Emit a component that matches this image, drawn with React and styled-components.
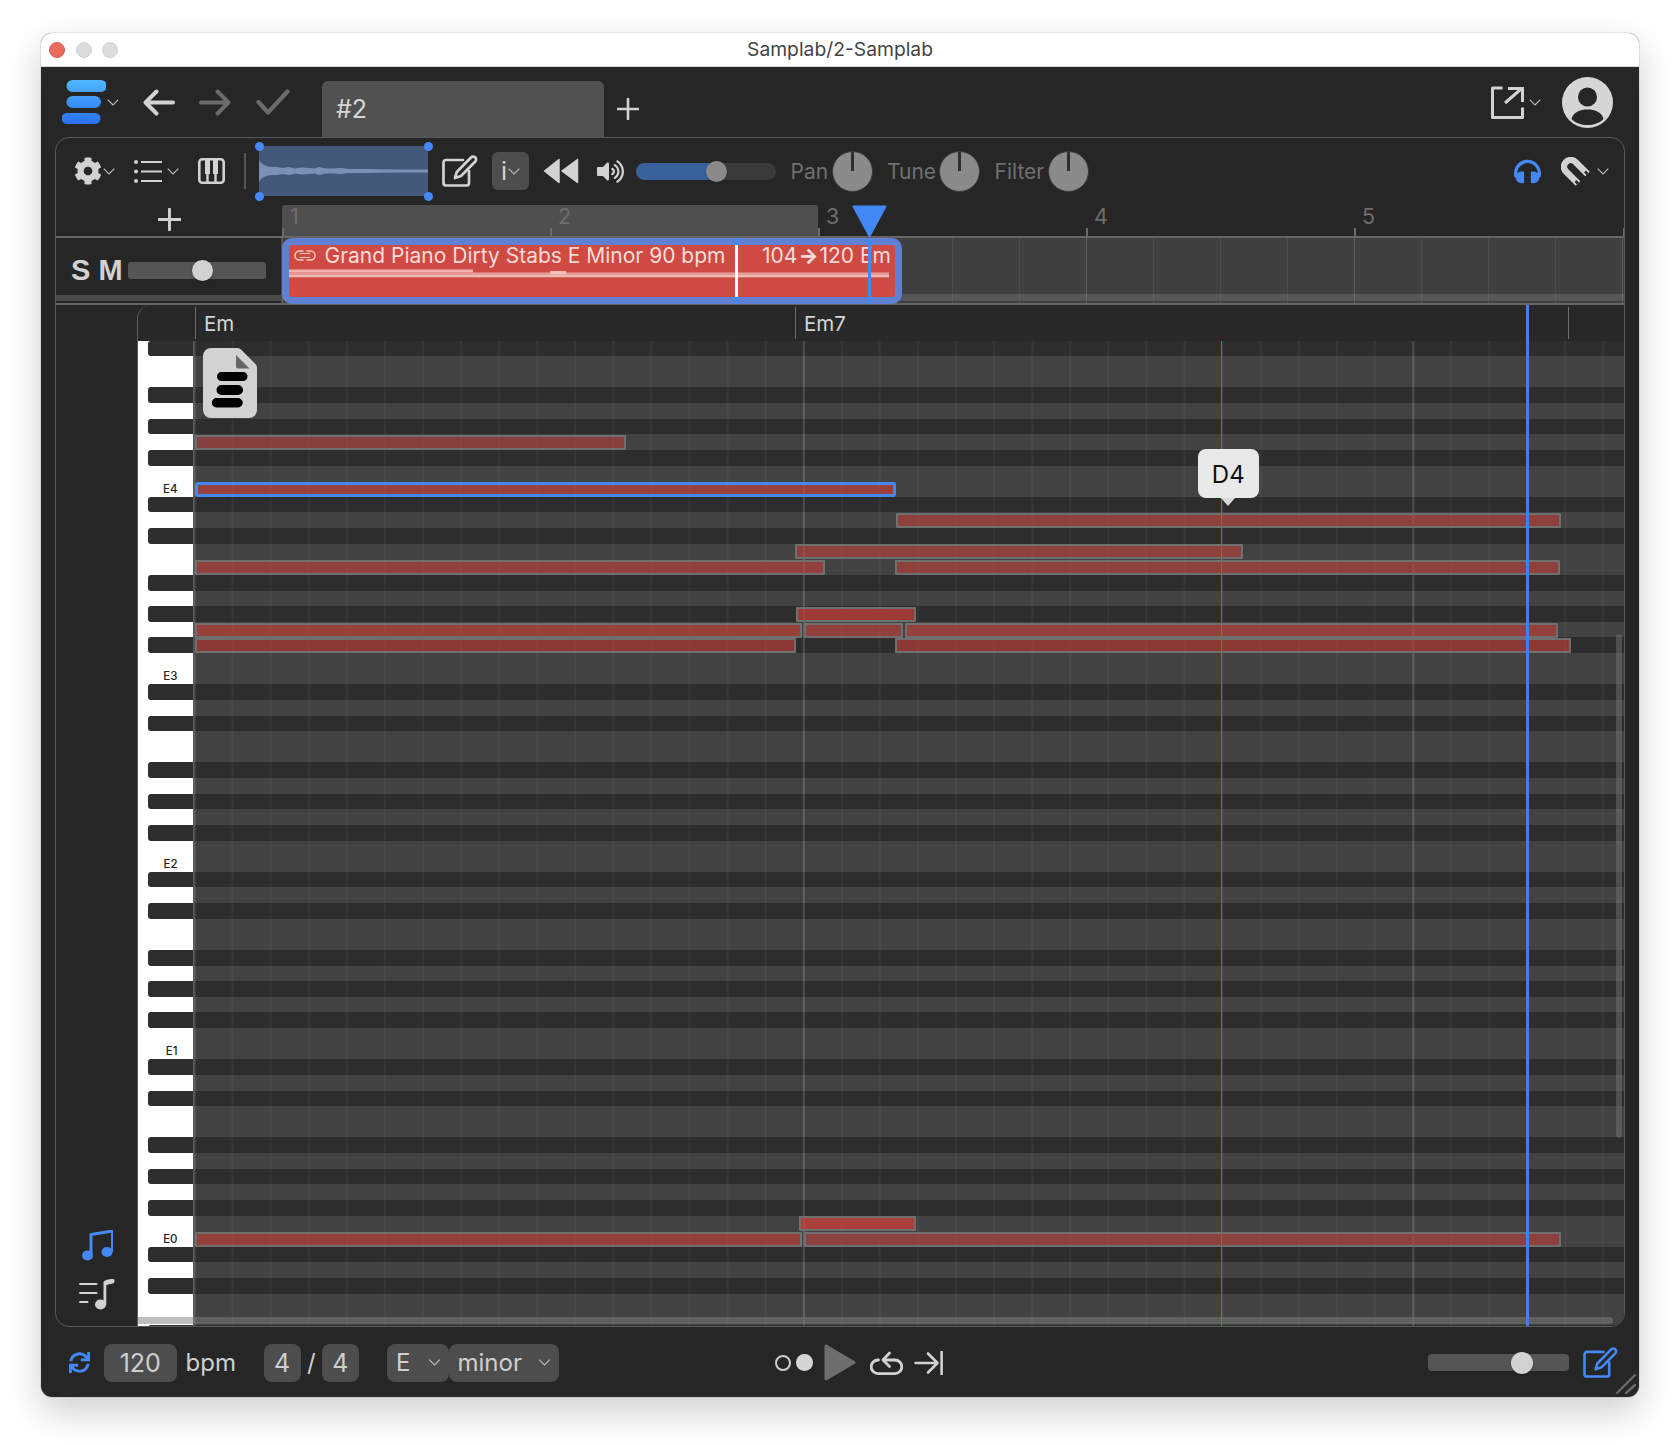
import React from 'react';
import styled, { createGlobalStyle } from 'styled-components';
import { FaCog, FaHeadphones, FaVolumeUp, FaSync } from 'react-icons/fa';

const Global = createGlobalStyle`
  html, body { margin: 0; padding: 0; background: #fff; }
  * { box-sizing: border-box; }
  body { font-family: Inter, "Liberation Sans", sans-serif; }
`;

const ROW = 15.63;
const BEAT = 38.09;
const GRID_ORIGIN = 194;
const ROWS = Array.from({ length: 64 }, (_, i) => i);
const LABELS = { 9: 'E4', 21: 'E3', 33: 'E2', 45: 'E1', 57: 'E0' };
const isBlack = (i) => [0, 3, 5, 7, 10].includes(i % 12);

const NOTES = [
  { row: 6, from: 195, to: 626, tone: 0.5 },
  { row: 9, from: 195, to: 896, tone: 0.66, selected: true },
  { row: 11, from: 896, to: 1561, tone: 0.58 },
  { row: 13, from: 795, to: 1243, tone: 0.58 },
  { row: 14, from: 195, to: 825, tone: 0.6 },
  { row: 14, from: 894.5, to: 1560, tone: 0.58 },
  { row: 17, from: 795.5, to: 916, tone: 0.72 },
  { row: 18, from: 195, to: 801.5, tone: 0.66 },
  { row: 18, from: 804, to: 903, tone: 0.6 },
  { row: 18, from: 904.5, to: 1558, tone: 0.62 },
  { row: 19, from: 195, to: 795.5, tone: 0.62 },
  { row: 19, from: 894.5, to: 1571, tone: 0.62 },
  { row: 56, from: 798.5, to: 916, tone: 0.78 },
  { row: 57, from: 195, to: 802, tone: 0.64 },
  { row: 57, from: 804, to: 1561, tone: 0.56 },
];

const Page = styled.div`
  width: 1680px;
  height: 1445px;
  padding: 33px 0 0 41px;
  background: #fff;
  overflow: hidden;
`;
const Window = styled.div`
  position: relative;
  width: 1598px;
  height: 1364px;
  display: flex;
  flex-direction: column;
  background: #262626;
  border-radius: 11px;
  overflow: hidden;
  box-shadow: 0 0 0 1px rgba(0, 0, 0, 0.07);
`;
const WindowFrame = styled.div`
  width: 1598px;
  height: 1364px;
  border-radius: 11px;
  box-shadow: 0 14px 36px rgba(0, 0, 0, 0.2);
`;
const TitleBar = styled.div`
  flex: none;
  height: 34px;
  background: #fff;
  border-bottom: 1px solid #d9d9d9;
  display: grid;
  grid-template-columns: 1fr auto 1fr;
  align-items: center;
`;
const Lights = styled.div`
  display: flex;
  gap: 10.5px;
  padding-left: 8px;
`;
const Light = styled.span`
  width: 16px;
  height: 16px;
  border-radius: 50%;
  background: ${(p) => (p.$on ? '#ec6a5e' : '#dcdcdc')};
  border: 1px solid ${(p) => (p.$on ? '#d9574c' : '#d2d2d2')};
`;
const Title = styled.div`
  font-size: 19.3px;
  line-height: 24px;
  margin-top: -2px;
  color: #444;
`;

const TopBar = styled.div`
  flex: none;
  height: 70px;
  display: flex;
  align-items: center;
  padding-right: 26px;
`;
const ToolIcon = styled.span`
  flex: none;
  display: flex;
  margin-left: ${(p) => p.$ml || 0}px;
  margin-top: ${(p) => p.$mt || 0}px;
  color: ${(p) => p.$c || '#d2d2d2'};
`;
const Spacer = styled.div`
  flex: 1;
`;
const Tab = styled.div`
  flex: none;
  align-self: flex-end;
  width: 282px;
  height: 56px;
  margin-left: 32px;
  padding-left: 14px;
  display: flex;
  align-items: center;
  background: #515151;
  border-radius: 6px 6px 0 0;
  color: #d6d6d6;
  font-size: 25px;
`;

const Panel = styled.div`
  flex: none;
  height: 1190px;
  margin: 0 14px;
  display: flex;
  flex-direction: column;
  border: 1px solid #5a5a5a;
  border-radius: 14px;
  overflow: hidden;
`;
const Toolbar = styled.div`
  flex: none;
  height: 67px;
  display: flex;
  align-items: center;
  padding: 0 15.5px 1px 0;
`;
const Divider = styled.span`
  flex: none;
  width: 2px;
  height: 36px;
  margin-left: 19px;
  background: #555;
`;
const Overview = styled.div`
  position: relative;
  flex: none;
  width: 169px;
  height: 50px;
  margin-left: 13px;
  background: #44597a;
  border-radius: 1px;
  display: flex;
`;
const Handle = styled.span`
  position: absolute;
  width: 9px;
  height: 9px;
  border-radius: 50%;
  background: #4488f5;
  ${(p) => (p.$right ? 'right: -4.5px;' : 'left: -4.5px;')}
  ${(p) => (p.$bottom ? 'bottom: -4.5px;' : 'top: -4.5px;')}
`;
const InfoButton = styled.div`
  flex: none;
  width: 37px;
  height: 38px;
  margin-left: 14px;
  padding-left: 9px;
  display: flex;
  align-items: center;
  gap: 1px;
  background: #4d4d4d;
  border-radius: 6px;
  color: #d2d2d2;
  font-size: 25px;
`;
const VolumeTrack = styled.div`
  position: relative;
  flex: none;
  width: 140px;
  height: 17px;
  margin-left: 12px;
  background: #3a3a3a;
  border-radius: 9px;
`;
const VolumeFill = styled.div`
  height: 100%;
  background: #39619a;
  border-radius: 9px 0 0 9px;
`;
const Thumb = styled.span`
  position: absolute;
  top: 50%;
  width: ${(p) => p.$size}px;
  height: ${(p) => p.$size}px;
  margin-top: ${(p) => -p.$size / 2}px;
  margin-left: ${(p) => -p.$size / 2}px;
  border-radius: 50%;
  background: ${(p) => p.$c};
  box-shadow: 0 1px 2px rgba(0, 0, 0, 0.3);
`;
const KnobGroup = styled.div`
  flex: none;
  display: flex;
  align-items: center;
  margin-left: ${(p) => p.$ml}px;
`;
const KnobLabel = styled.span`
  width: ${(p) => p.$w}px;
  font-size: 21px;
  color: #707070;
`;
const Knob = styled.span`
  position: relative;
  width: 41px;
  height: 41px;
  border-radius: 50%;
  background: #8a8a8a;
  border: 1px solid #3a3a3a;
  &::after {
    content: '';
    position: absolute;
    left: 18px;
    top: 0;
    width: 3px;
    height: 19px;
    background: #2e2e2e;
  }
`;

const RulerRow = styled.div`
  position: relative;
  flex: none;
  height: 33px;
  display: flex;
  border-bottom: 2px solid #666;
`;
const RulerHead = styled.div`
  flex: none;
  width: 226px;
  display: flex;
  justify-content: flex-end;
  padding: 3px 101px 0 0;
`;
const Bar = styled.div`
  position: relative;
  flex: ${(p) => (p.$last ? '1' : '0 0 268px')};
  padding-left: 8px;
  font-size: 21.5px;
  line-height: 22px;
  color: #6e6e6e;
  background: ${(p) => (p.$loop ? '#4f4f4f' : 'transparent')};
  border-radius: ${(p) => (p.$loopStart ? '3px 0 0 0' : p.$loopEnd ? '0 3px 0 0' : '0')};
  &::before {
    content: '';
    position: absolute;
    left: 0;
    bottom: 0;
    width: 1.5px;
    height: 8px;
    background: #6a6a6a;
  }
`;
const PlayMarker = styled.span`
  position: absolute;
  left: 795.5px;
  top: 0;
  display: flex;
`;
const LastTick = styled.span`
  position: absolute;
  right: 0;
  bottom: 0;
  width: 1.5px;
  height: 8px;
  background: #6a6a6a;
`;

const TrackRow = styled.div`
  flex: none;
  height: 67px;
  display: flex;
  border-bottom: 2px solid #666;
`;
const TrackHead = styled.div`
  position: relative;
  flex: none;
  width: 226px;
  display: flex;
  align-items: center;
  padding: 0 0 0 15px;
  border-right: 1px solid #4e4e4e;
`;
const SoloMute = styled.span`
  flex: none;
  font-size: 29px;
  font-weight: 700;
  color: #d2d2d2;
  font-family: "Liberation Sans", Arial, sans-serif;
`;
const TrackSlider = styled.div`
  position: relative;
  flex: none;
  width: 138px;
  height: 17px;
  margin-left: 5px;
  background: #555;
  border-radius: 3px;
`;
const HeadScroll = styled.span`
  position: absolute;
  left: 0;
  right: 0;
  bottom: 2px;
  height: 6px;
  background: #4b4b4b;
`;
const Lane = styled.div`
  position: relative;
  flex: 1;
  background-color: #404040;
  background-image: linear-gradient(90deg, #5e5e5e 1.5px, transparent 1.5px),
    linear-gradient(90deg, #4c4c4c 1.5px, transparent 1.5px);
  background-size: 268px 100%, 67px 100%;
`;
const LaneScroll = styled.span`
  position: absolute;
  left: 0;
  right: 0;
  bottom: 2px;
  height: 7px;
  background: rgba(140, 140, 140, 0.3);
`;
const Clip = styled.div`
  position: absolute;
  left: 0;
  top: 0;
  width: 620px;
  height: 66px;
  background: #cf4a43;
  border: 7px solid #5f80d3;
  border-radius: 10px;
  display: flex;
  flex-direction: column;
`;
const ClipHead = styled.div`
  position: relative;
  display: flex;
  align-items: center;
  height: 21px;
  padding-left: 4.5px;
  color: #f9dcda;
  font-size: 21px;
  white-space: nowrap;
`;
const ClipName = styled.span`
  margin-left: 9px;
`;
const ClipTempo = styled.span`
  position: absolute;
  right: 4px;
  top: 0;
  line-height: 21px;
`;
const TempoArrow = styled.span`
  font-weight: 800;
  margin: 0 1px;
`;
const ClipWave = styled.svg`
  display: block;
  margin-top: 1px;
`;
const ClipCut = styled.span`
  position: absolute;
  top: -7px;
  bottom: -7px;
  left: 445.5px;
  width: 3px;
  background: #4488f5;
  &::after {
    content: '';
    position: absolute;
    top: 7px;
    bottom: 7px;
    left: 0;
    right: 0;
    background: #fff;
  }
`;
const ClipPlayhead = styled.span`
  position: absolute;
  top: -7px;
  bottom: -7px;
  left: 578.5px;
  width: 3px;
  background: #4488f5;
`;

const Body = styled.div`
  flex: 1;
  min-height: 0;
  display: flex;
`;
const SideRail = styled.div`
  flex: none;
  width: 81px;
  display: flex;
  flex-direction: column;
  justify-content: flex-end;
  padding: 0 0 16px 23px;
`;
const Roll = styled.div`
  position: relative;
  flex: 1;
  min-width: 0;
  display: flex;
  flex-direction: column;
  border-left: 1px solid #5f5f5f;
  border-top-left-radius: 14px;
  overflow: hidden;
  background: #282828;
`;
const ChordBar = styled.div`
  flex: none;
  height: 36px;
  display: flex;
  font-size: 20.5px;
  color: #d4d4d4;
`;
const ChordCorner = styled.div`
  flex: none;
  width: 57px;
`;
const Chord = styled.div`
  flex: ${(p) => (p.$w ? `0 0 ${p.$w}px` : '1')};
  margin: 2px 0;
  padding: 0 0 0 8px;
  display: flex;
  align-items: center;
  border-left: 1px solid #6f6f6f;
`;
const RollBody = styled.div`
  position: relative;
  flex: 1;
  min-height: 0;
  display: flex;
`;
const Piano = styled.div`
  flex: none;
  width: 55px;
  background: #fff;
  overflow: hidden;
`;
const KeyStack = styled.div`
  margin-top: -0.5px;
`;
const PianoRow = styled.div`
  position: relative;
  height: ${ROW}px;
  display: flex;
  align-items: center;
  justify-content: flex-end;
  padding-left: ${(p) => (p.$black ? 10 : 0)}px;
  padding-right: ${(p) => (p.$black ? 0 : 15.5)}px;
`;
const BlackKey = styled.span`
  flex: 1;
  height: 100%;
  background: #2e2e2e;
  border-radius: 3px 0 0 3px;
`;
const KeyLabel = styled.span`
  font-size: 11.5px;
  font-weight: 500;
  color: #222;
`;
const Grid = styled.div`
  position: relative;
  flex: 1;
  min-width: 0;
  overflow: hidden;
  border-left: 1px solid #5a5a5a;
`;
const GridRows = styled.div`
  margin-top: -0.5px;
`;
const GridRow = styled.div`
  height: ${ROW}px;
  background: ${(p) => (p.$black ? '#2d2d2d' : '#424242')};
`;
const GridLines = styled.div`
  position: absolute;
  inset: 0;
  background-image: linear-gradient(90deg, rgba(255, 255, 255, 0.12) 1.5px, transparent 1.5px),
    linear-gradient(90deg, rgba(255, 255, 255, 0.04) 1.5px, transparent 1.5px);
  background-size: ${BEAT * 16}px 100%, ${BEAT}px 100%;
  background-position: -0.5px 0;
`;
const Note = styled.div`
  position: absolute;
  height: 15px;
  background: rgba(198, 64, 58, ${(p) => p.$tone});
  border: ${(p) => (p.$selected ? '3px solid #4488f5' : '2px solid #6f6f6f')};
  border-radius: ${(p) => (p.$selected ? 3 : 1)}px;
`;
const RedLine = styled.span`
  position: absolute;
  left: 1026.5px;
  top: 0;
  bottom: 0;
  width: 1.5px;
  background: #d8453f;
`;
const Tooltip = styled.div`
  position: absolute;
  left: 1004px;
  top: 108px;
  width: 60.5px;
  height: 49px;
  padding-top: 1px;
  display: flex;
  align-items: center;
  justify-content: center;
  background: rgba(238, 238, 238, 0.97);
  border-radius: 8px;
  color: #111;
  font-size: 24px;
  &::after {
    content: '';
    position: absolute;
    left: 23px;
    top: 100%;
    border-top: 8px solid #d8d8d8;
    border-left: 7px solid transparent;
    border-right: 7px solid transparent;
  }
`;
const FileBadge = styled.span`
  position: absolute;
  left: 9px;
  top: 7px;
  display: flex;
`;
const BlueLine = styled.span`
  position: absolute;
  left: 1387.8px;
  top: 0;
  bottom: 0;
  width: 3px;
  background: #3f80ea;
`;
const HScroll = styled.span`
  position: absolute;
  left: 0;
  right: 11px;
  bottom: 2.5px;
  height: 7px;
  border-radius: 0 4px 4px 0;
  background: rgba(125, 125, 125, 0.5);
`;
const VScroll = styled.span`
  position: absolute;
  right: 2.5px;
  top: 293px;
  width: 6px;
  height: 504px;
  border-radius: 3px;
  background: rgba(125, 125, 125, 0.42);
`;

const Footer = styled.div`
  position: relative;
  flex: 1;
  display: flex;
  align-items: center;
  padding: 1px 21px 0 0;
`;
const NumBox = styled.div`
  flex: none;
  width: ${(p) => p.$w}px;
  height: 38px;
  margin-left: ${(p) => p.$ml}px;
  display: flex;
  align-items: center;
  justify-content: center;
  background: #4d4d4d;
  border-radius: 8px;
  color: #cfcfcf;
  font-size: 25px;
`;
const FootText = styled.span`
  flex: none;
  width: ${(p) => p.$w}px;
  margin-left: ${(p) => p.$ml}px;
  color: #cfcfcf;
  font-size: 24px;
  text-align: ${(p) => p.$align || 'left'};
`;
const SelectBox = styled.div`
  flex: none;
  width: ${(p) => p.$w}px;
  height: 38px;
  margin-left: ${(p) => p.$ml || 0}px;
  padding: 0 8px 0 9px;
  display: flex;
  align-items: center;
  justify-content: space-between;
  background: #4d4d4d;
  border-radius: 8px;
  color: #cfcfcf;
  font-size: 24px;
`;
const RecRing = styled.span`
  flex: none;
  width: 16px;
  height: 16px;
  margin-left: 216px;
  border: 2.5px solid #cfcfcf;
  border-radius: 50%;
`;
const RecDot = styled.span`
  flex: none;
  width: 16.5px;
  height: 16.5px;
  margin-left: 5.5px;
  background: #d6d6d6;
  border-radius: 50%;
`;
const ZoomTrack = styled.div`
  position: relative;
  flex: none;
  width: 141px;
  height: 17px;
  background: #555;
  border-radius: 4px;
`;
const Grip = styled.svg`
  position: absolute;
  right: 2px;
  bottom: 3px;
`;

const Chevron = ({ w = 12, c = '#bdbdbd' }) => (
  <svg width={w} height={7} viewBox="0 0 12 7" fill="none">
    <path d="M.7.7 6 6 11.3.7" stroke={c} strokeWidth="1.1" />
  </svg>
);

const Logo = () => (
  <svg width="44" height="44" viewBox="0 0 44 44">
    <defs>
      <linearGradient id="logoG" x1="0" y1="0" x2="0" y2="1">
        <stop offset="0" stopColor="#4fb7ff" />
        <stop offset="1" stopColor="#2a70ee" />
      </linearGradient>
    </defs>
    <path
      d="M10.5 0H39a5 5 0 0 1 0 12H10.5a5 5 0 0 1 0-12zM10.5 16H33a5 5 0 0 1 0 12H10.5a5 5 0 0 1 0-12zM5 33H33a5 5 0 0 1 0 11H5a5 5 0 0 1 0-11z"
      fill="url(#logoG)"
    />
  </svg>
);

const ArrowLeft = ({ c }) => (
  <svg width="32" height="27" viewBox="0 0 32 27" fill="none" stroke={c} strokeWidth="4" strokeLinecap="round" strokeLinejoin="round">
    <path d="M30 13.500H4M13.500 2.500 2.500 13.500l11 11" />
  </svg>
);
const ArrowRight = ({ c }) => (
  <svg width="32" height="27" viewBox="0 0 32 27" fill="none" stroke={c} strokeWidth="4" strokeLinecap="round" strokeLinejoin="round">
    <path d="M2 13.500h26M18.500 2.500l11 11-11 11" />
  </svg>
);
const Check = () => (
  <svg width="34" height="26" viewBox="0 0 34 26" fill="none" stroke="#6b6b6b" strokeWidth="4.200" strokeLinecap="round" strokeLinejoin="round">
    <path d="M2.500 13 12 23.500 31.500 2.500" />
  </svg>
);
const Plus = ({ s = 22, w = 2.6 }) => (
  <svg width={s} height={s} viewBox="0 0 22 22" fill="none" stroke="#d2d2d2" strokeWidth={w} strokeLinecap="round">
    <path d="M11 1v20M1 11h20" />
  </svg>
);
const ExportIcon = () => (
  <svg width="33" height="33" viewBox="0 0 33 33" fill="none" stroke="#d2d2d2" strokeWidth="3">
    <path d="M11.500 2H1.500v29.500H31.500V21.500" strokeLinejoin="round" />
    <path d="M14 17 29.500 3.500M17 2.500H31.500V16" />
  </svg>
);
const Avatar = () => (
  <svg width="51" height="51" viewBox="0 0 51 51">
    <circle cx="25.500" cy="25.500" r="25.500" fill="#d6d6d6" />
    <circle cx="25.500" cy="20" r="9.500" fill="#262626" />
    <path d="M9.500 42c2-7 8-9.500 16-9.500S39.500 35 41.500 42c-4 4-10 6-16 6s-12-2-16-6z" fill="#262626" />
  </svg>
);
const ListIcon = () => (
  <svg width="28" height="23" viewBox="0 0 28 23" fill="#d2d2d2">
    <circle cx="2" cy="2" r="2" />
    <circle cx="2" cy="11.500" r="2" />
    <circle cx="2" cy="21" r="2" />
    <rect x="7" y="1" width="21" height="2" />
    <rect x="7" y="10.500" width="21" height="2" />
    <rect x="7" y="20" width="21" height="2" />
  </svg>
);
const PianoIcon = () => (
  <svg width="27" height="26" viewBox="0 0 27 26" fill="none">
    <rect x="1.300" y="1.300" width="24.400" height="23.400" rx="3" stroke="#d2d2d2" strokeWidth="2.600" />
    <path d="M9.500 15v9M17.500 15v9" stroke="#d2d2d2" strokeWidth="2.400" />
    <path d="M7 2h5v14H7zM15 2h5v14h-5z" fill="#d2d2d2" />
  </svg>
);
const OverviewWave = () => (
  <svg width="169" height="50" viewBox="0 0 169 50">
    <polygon
      fill="#7a90b5"
      points="0,14 2,17 5,19 9,20.500 13,21 18,21 24,22 30,21 36,22.500 42,21.500 50,22 56,22.500 60,21 66,22.500 74,22.500 82,22 90,23 110,23 120,23.300 140,23.500 169,23.500 169,26.500 140,26.500 120,26.800 110,27 90,27 82,28 74,27.500 66,27.500 60,29 56,27.500 50,28 42,28.500 36,27.500 30,29 24,28 18,29 13,29 9,29.500 5,31 2,33 0,36"
    />
  </svg>
);
const EditIcon = ({ c = '#d2d2d2', w = 36, h = 32 }) => (
  <svg width={w} height={h} viewBox="0 0 36 32" fill="none" stroke={c} strokeWidth="2.700" strokeLinecap="round" strokeLinejoin="round">
    <path d="M21 5H4a2.500 2.500 0 0 0-2.500 2.500V28A2.500 2.500 0 0 0 4 30.500h20.500A2.500 2.500 0 0 0 27 28V16" />
    <path d="M29 2.500a2.900 2.900 0 0 1 4.300 4L19 21l-6 2 1.800-6z" />
  </svg>
);
const Rewind = () => (
  <svg width="36" height="26" viewBox="0 0 36 26" fill="#d2d2d2" stroke="#d2d2d2" strokeWidth="1.500" strokeLinejoin="round">
    <path d="M16 1.500v23L1.500 13zM34.500 1.500v23L19 13z" />
  </svg>
);
const Magnet = () => (
  <svg width="31" height="29" viewBox="0 0 30 29" fill="none">
    <path d="M26 17 14 5a6.700 6.700 0 0 0-9.500 9.500l12 12" stroke="#d2d2d2" strokeWidth="6.500" />
    <path d="M23.500 14.500l2.500 2.500M14 24l2.500 2.500" stroke="#262626" strokeWidth="2.600" />
  </svg>
);
const MarkerTriangle = () => (
  <svg width="35" height="32" viewBox="0 0 35 32">
    <path d="M1.500 1.500h32L17.500 31z" fill="#4488f5" stroke="#4488f5" strokeWidth="2" strokeLinejoin="round" />
  </svg>
);
const LinkIcon = () => (
  <svg width="22" height="13" viewBox="0 0 22 13" fill="none" stroke="#f3c9c6" strokeWidth="1.500">
    <path d="M9.500 2H5.500a4.500 4.500 0 0 0 0 9h4" />
    <path d="M12.500 2h4a4.500 4.500 0 0 1 0 9h-4" />
    <path d="M6 8.500h10M6 4.500h10" strokeWidth="1.200" />
  </svg>
);
const ClipWaveform = () => (
  <ClipWave width="606" height="12" viewBox="0 0 606 12">
    <rect x="0" y="2.500" width="184" height="3" fill="#efb4b0" />
    <rect x="0" y="5.500" width="600" height="2" fill="#e99f9a" />
    <rect x="0" y="7.500" width="600" height="2.800" fill="#efb9b5" />
    <rect x="261" y="4" width="16" height="3.500" fill="#f2c2be" />
  </ClipWave>
);
const FileIcon = () => (
  <svg width="54" height="70" viewBox="0 0 54 70">
    <path d="M8 0h26c1.500 0 3 .6 4 1.600L52.400 16c1 1 1.600 2.400 1.600 4v42a8 8 0 0 1-8 8H8a8 8 0 0 1-8-8V8a8 8 0 0 1 8-8z" fill="#d2d2d2" />
    <path d="M33 7l13.500 13.500H35a2 2 0 0 1-2-2z" fill="#666" />
    <path d="M18.500 24H40a4.500 4.500 0 0 1 0 9H18.500a4.500 4.500 0 0 1 0-9zM18.500 37H35a5 5 0 0 1 0 10H18.500a5 5 0 0 1 0-10zM13.500 50H35a4.500 4.500 0 0 1 0 9.500H13.500a4.750 4.750 0 0 1 0-9.500z" fill="#000" />
  </svg>
);
const NotesIcon = () => (
  <svg width="31" height="31" viewBox="0 0 31 31" fill="#4488f5">
    <ellipse cx="5.500" cy="25.500" rx="5.500" ry="5" />
    <ellipse cx="25" cy="22" rx="5.500" ry="5" />
    <path d="M9 26V4.500L30.500 1v21" fill="none" stroke="#4488f5" strokeWidth="3" strokeLinejoin="round" />
  </svg>
);
const ScoreIcon = () => (
  <svg width="36" height="31" viewBox="0 0 36 31" fill="#d2d2d2">
    <rect x="0" y="4" width="18.500" height="2" rx="1" />
    <rect x="0" y="13" width="18.500" height="2" rx="1" />
    <rect x="0" y="22" width="9.500" height="2" rx="1" />
    <ellipse cx="21.500" cy="25.500" rx="5.500" ry="5" />
    <rect x="24.500" y="3" width="2.800" height="23" />
    <path d="M24.500 3c1-2 5-3 9.500-3 1.500 0 2 2 1 4-3 1-7 1.500-8 2.500z" />
  </svg>
);
const PlayIcon = () => (
  <svg width="32" height="37" viewBox="0 0 32 37" fill="#6e6e6e" stroke="#6e6e6e" strokeWidth="3" strokeLinejoin="round">
    <path d="M2 2 30 18.500 2 35z" />
  </svg>
);
const LoopIcon = () => (
  <svg width="33" height="24" viewBox="0 0 33 24" fill="none" stroke="#d2d2d2" strokeWidth="2.800" strokeLinecap="round" strokeLinejoin="round">
    <path d="M8.500 9H8a6.800 6.800 0 0 0 0 13.600h17A6.800 6.800 0 0 0 25 9H14" />
    <path d="M19.500 2 13 9l6.500 6.500" />
  </svg>
);
const NextIcon = () => (
  <svg width="29" height="26" viewBox="0 0 29 26" fill="none" stroke="#d2d2d2" strokeWidth="2.600" strokeLinecap="round" strokeLinejoin="round">
    <path d="M1.500 13h21M14 3.500 23.500 13 14 22.500" />
    <path d="M27.600 1v24" strokeLinecap="butt" />
  </svg>
);

export default function App() {
  return (
    <Page>
      <Global />
      <WindowFrame>
        <Window>
          <TitleBar>
            <Lights>
              <Light $on />
              <Light />
              <Light />
            </Lights>
            <Title>Samplab/2-Samplab</Title>
            <div />
          </TitleBar>

          <TopBar>
            <ToolIcon $ml={21}><Logo /></ToolIcon>
            <ToolIcon $ml={1}><Chevron /></ToolIcon>
            <ToolIcon $ml={24}><ArrowLeft c="#d2d2d2" /></ToolIcon>
            <ToolIcon $ml={24}><ArrowRight c="#6b6b6b" /></ToolIcon>
            <ToolIcon $ml={25}><Check /></ToolIcon>
            <Tab>#2</Tab>
            <ToolIcon $ml={13} $mt={13}><Plus /></ToolIcon>
            <Spacer />
            <ToolIcon><ExportIcon /></ToolIcon>
            <ToolIcon $ml={5}><Chevron /></ToolIcon>
            <ToolIcon $ml={21}><Avatar /></ToolIcon>
          </TopBar>

          <Panel>
            <Toolbar>
              <ToolIcon $ml={18}><FaCog size={28} /></ToolIcon>
              <ToolIcon $ml={1}><Chevron /></ToolIcon>
              <ToolIcon $ml={19}><ListIcon /></ToolIcon>
              <ToolIcon $ml={5}><Chevron /></ToolIcon>
              <ToolIcon $ml={19}><PianoIcon /></ToolIcon>
              <Divider />
              <Overview>
                <OverviewWave />
                <Handle />
                <Handle $right />
                <Handle $bottom />
                <Handle $right $bottom />
              </Overview>
              <ToolIcon $ml={14}><EditIcon /></ToolIcon>
              <InfoButton>
                i
                <Chevron w={12} />
              </InfoButton>
              <ToolIcon $ml={13.5}><Rewind /></ToolIcon>
              <ToolIcon $ml={18}><FaVolumeUp size={27} /></ToolIcon>
              <VolumeTrack>
                <VolumeFill style={{ width: '58%' }} />
                <Thumb $size={21} $c="#8a8a8a" style={{ left: '58%' }} />
              </VolumeTrack>
              <KnobGroup $ml={15}>
                <KnobLabel $w={41}>Pan</KnobLabel>
                <Knob />
              </KnobGroup>
              <KnobGroup $ml={14.5}>
                <KnobLabel $w={51.5}>Tune</KnobLabel>
                <Knob />
              </KnobGroup>
              <KnobGroup $ml={15}>
                <KnobLabel $w={53.5}>Filter</KnobLabel>
                <Knob />
              </KnobGroup>
              <Spacer />
              <ToolIcon $c="#4488f5"><FaHeadphones size={27} /></ToolIcon>
              <ToolIcon $ml={20}><Magnet /></ToolIcon>
              <ToolIcon $ml={5}><Chevron /></ToolIcon>
            </Toolbar>

            <RulerRow>
              <RulerHead><Plus s={23} w={2.8} /></RulerHead>
              <Bar $loop $loopStart>1</Bar>
              <Bar $loop $loopEnd>2</Bar>
              <Bar>3</Bar>
              <Bar>4</Bar>
              <Bar $last>5</Bar>
              <LastTick />
              <PlayMarker><MarkerTriangle /></PlayMarker>
            </RulerRow>

            <TrackRow>
              <TrackHead>
                <SoloMute>S M</SoloMute>
                <TrackSlider>
                  <Thumb $size={21} $c="#d2d2d2" style={{ left: '54.500%' }} />
                </TrackSlider>
                <HeadScroll />
              </TrackHead>
              <Lane>
                <LaneScroll />
                <Clip>
                  <ClipHead>
                    <LinkIcon />
                    <ClipName>Grand Piano Dirty Stabs E Minor 90 bpm</ClipName>
                    <ClipTempo>104<TempoArrow>{'\u2192'}</TempoArrow>120 Em</ClipTempo>
                  </ClipHead>
                  <ClipWaveform />
                  <ClipCut />
                  <ClipPlayhead />
                </Clip>
              </Lane>
            </TrackRow>

            <Body>
              <SideRail>
                <ToolIcon $ml={3} $c="#4488f5"><NotesIcon /></ToolIcon>
                <ToolIcon $mt={18}><ScoreIcon /></ToolIcon>
              </SideRail>
              <Roll>
                <ChordBar>
                  <ChordCorner />
                  <Chord $w={600}>Em</Chord>
                  <Chord $w={773}>Em7</Chord>
                  <Chord />
                </ChordBar>
                <RollBody>
                  <Piano>
                    <KeyStack>
                      {ROWS.map((i) => (
                        <PianoRow key={i} $black={isBlack(i)}>
                          {isBlack(i) ? <BlackKey /> : LABELS[i] ? <KeyLabel>{LABELS[i]}</KeyLabel> : null}
                        </PianoRow>
                      ))}
                    </KeyStack>
                  </Piano>
                  <Grid>
                    <GridRows>
                      {ROWS.map((i) => (
                        <GridRow key={i} $black={isBlack(i)} />
                      ))}
                    </GridRows>
                    <GridLines />
                    {NOTES.map((n) => (
                      <Note
                        key={`${n.row}-${n.from}`}
                        $tone={n.tone}
                        $selected={n.selected}
                        style={{
                          left: n.from - GRID_ORIGIN,
                          width: n.to - n.from,
                          top: n.row * ROW + 0.2,
                        }}
                      />
                    ))}
                    <RedLine />
                    <Tooltip>D4</Tooltip>
                    <FileBadge><FileIcon /></FileBadge>
                    <VScroll />
                  </Grid>
                  <HScroll />
                </RollBody>
                <BlueLine />
              </Roll>
            </Body>
          </Panel>

          <Footer>
            <ToolIcon $ml={27.5} $c="#4488f5"><FaSync size={21} /></ToolIcon>
            <NumBox $w={73.5} $ml={14}>120</NumBox>
            <FootText $w={49} $ml={8.5}>bpm</FootText>
            <NumBox $w={37} $ml={29}>4</NumBox>
            <FootText $w={21.5} $ml={0} $align="center">/</FootText>
            <NumBox $w={36.5} $ml={0}>4</NumBox>
            <SelectBox $w={61.5} $ml={28.500}>
              E
              <Chevron w={13} />
            </SelectBox>
            <SelectBox $w={110}>
              minor
              <Chevron w={13} />
            </SelectBox>
            <RecRing />
            <RecDot />
            <ToolIcon $ml={11.5}><PlayIcon /></ToolIcon>
            <ToolIcon $ml={14}><LoopIcon /></ToolIcon>
            <ToolIcon $ml={11}><NextIcon /></ToolIcon>
            <Spacer />
            <ZoomTrack>
              <Thumb $size={22} $c="#d2d2d2" style={{ left: '66.700%' }} />
            </ZoomTrack>
            <ToolIcon $ml={14} $c="#4488f5"><EditIcon c="#4488f5" w={35} h={31} /></ToolIcon>
            <Grip width="22" height="20" viewBox="0 0 22 20" fill="none" stroke="#6a6a6a" strokeWidth="2.400" strokeLinecap="round">
              <path d="M2 19 20 1M11 19l9-8" />
            </Grip>
          </Footer>
        </Window>
      </WindowFrame>
    </Page>
  );
}
